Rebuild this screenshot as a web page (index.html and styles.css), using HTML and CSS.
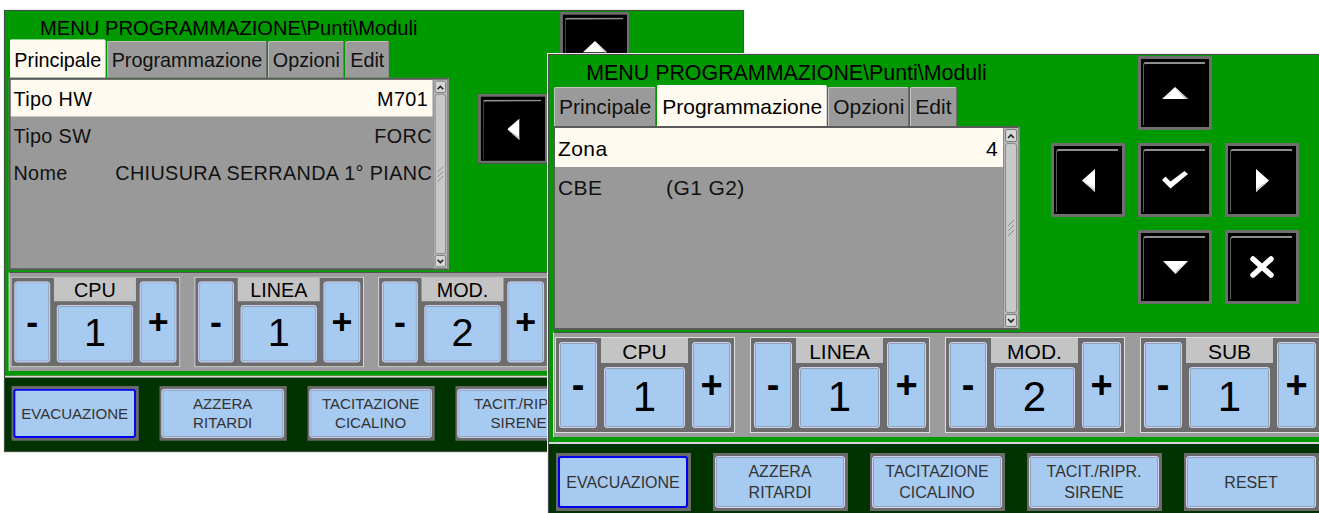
FILE: index.html
```html
<!DOCTYPE html>
<html lang="it">
<head>
<meta charset="utf-8">
<title>Menu Programmazione</title>
<link rel="stylesheet" href="styles.css">
</head>
<body>

<div class="win win-back">
  <div class="top">
    <div class="leftcol">
      <div class="title">MENU PROGRAMMAZIONE\Punti\Moduli</div>
      <div class="tabs">
        <div class="tab active">Principale</div>
        <div class="tab">Programmazione</div>
        <div class="tab">Opzioni</div>
        <div class="tab">Edit</div>
      </div>
      <div class="list">
        <div class="rows">
          <div class="row sel"><span class="k">Tipo HW</span><span class="v right">M701</span></div>
          <div class="row"><span class="k">Tipo SW</span><span class="v right edge">FORC</span></div>
          <div class="row"><span class="k">Nome</span><span class="v">CHIUSURA SERRANDA 1° PIANC</span></div>
        </div>
        <div class="sb">
          <div class="sbtn"><svg width="8" height="6" viewBox="0 0 8 6"><polyline points="1,5 4,2 7,5" fill="none" stroke="#222" stroke-width="1.6"/></svg></div>
          <div class="thumb"><svg width="10" height="20" viewBox="0 0 10 20"><g stroke="#8a8a8a" stroke-width="1"><line x1="8" y1="2" x2="2" y2="8"/><line x1="8" y1="7" x2="2" y2="13"/><line x1="8" y1="12" x2="2" y2="18"/></g></svg></div>
          <div class="sbtn"><svg width="8" height="6" viewBox="0 0 8 6"><polyline points="1,1 4,4 7,1" fill="none" stroke="#222" stroke-width="1.6"/></svg></div>
        </div>
      </div>
    </div>
    <div class="nav">
      <div class="nb up"><svg width="26" height="12" viewBox="0 0 26 12"><polygon points="0,12 13,0 26,12" fill="#fff"/><polygon points="13,0 26,12 23,12" fill="#c8c8c8"/></svg></div>
      <div class="nb left"><svg width="13" height="23" viewBox="0 0 13 23"><polygon points="13,0 0,11.5 13,23" fill="#fff"/><polygon points="0,11.5 13,23 13,20" fill="#c8c8c8"/></svg></div>
      <div class="nb ok"><svg width="26" height="18" viewBox="0 0 26 18"><path d="M0 9 L3.5 5.5 L8.5 10.5 L22.5 0 L26 3 L8.5 17.5 Z" fill="#fff"/></svg></div>
      <div class="nb right"><svg width="13" height="23" viewBox="0 0 13 23"><polygon points="0,0 13,11.5 0,23" fill="#fff"/><polygon points="13,11.5 0,23 0,20" fill="#c8c8c8"/></svg></div>
      <div class="nb down"><svg width="25" height="13" viewBox="0 0 25 13"><polygon points="0,0 25,0 12.5,13" fill="#fff"/><polygon points="25,0 12.5,13 13,10" fill="#c8c8c8"/></svg></div>
      <div class="nb cancel"><svg width="26" height="24" viewBox="0 0 26 24"><path d="M4 4 L22 20 M22 4 L4 20" stroke="#fff" stroke-width="5.5" stroke-linecap="round"/></svg></div>
    </div>
  </div>
  <div class="panel">
    <div class="grp"><div class="pm">-</div><div class="mid"><div class="lbl">CPU</div><div class="val">1</div></div><div class="pm plus">+</div></div>
    <div class="grp"><div class="pm">-</div><div class="mid"><div class="lbl">LINEA</div><div class="val">1</div></div><div class="pm plus">+</div></div>
    <div class="grp"><div class="pm">-</div><div class="mid"><div class="lbl">MOD.</div><div class="val">2</div></div><div class="pm plus">+</div></div>
  </div>
  <div class="bar">
    <div class="bb"><div class="bbi focus">EVACUAZIONE</div></div>
    <div class="bb"><div class="bbi">AZZERA<br>RITARDI</div></div>
    <div class="bb"><div class="bbi">TACITAZIONE<br>CICALINO</div></div>
    <div class="bb"><div class="bbi">TACIT./RIPR.<br>SIRENE</div></div>
  </div>
</div>

<div class="win win-front">
  <div class="top">
    <div class="leftcol">
      <div class="title">MENU PROGRAMMAZIONE\Punti\Moduli</div>
      <div class="tabs">
        <div class="tab">Principale</div>
        <div class="tab active">Programmazione</div>
        <div class="tab">Opzioni</div>
        <div class="tab">Edit</div>
      </div>
      <div class="list">
        <div class="rows">
          <div class="row sel"><span class="k">Zona</span><span class="v right">4</span></div>
          <div class="row"><span class="k">CBE</span><span class="v">(G1 G2)</span></div>
        </div>
        <div class="sb">
          <div class="sbtn"><svg width="8" height="6" viewBox="0 0 8 6"><polyline points="1,5 4,2 7,5" fill="none" stroke="#222" stroke-width="1.6"/></svg></div>
          <div class="thumb"><svg width="10" height="20" viewBox="0 0 10 20"><g stroke="#8a8a8a" stroke-width="1"><line x1="8" y1="2" x2="2" y2="8"/><line x1="8" y1="7" x2="2" y2="13"/><line x1="8" y1="12" x2="2" y2="18"/></g></svg></div>
          <div class="sbtn"><svg width="8" height="6" viewBox="0 0 8 6"><polyline points="1,1 4,4 7,1" fill="none" stroke="#222" stroke-width="1.6"/></svg></div>
        </div>
      </div>
    </div>
    <div class="nav">
      <div class="nb up"><svg width="26" height="12" viewBox="0 0 26 12"><polygon points="0,12 13,0 26,12" fill="#fff"/><polygon points="13,0 26,12 23,12" fill="#c8c8c8"/></svg></div>
      <div class="nb left"><svg width="13" height="23" viewBox="0 0 13 23"><polygon points="13,0 0,11.5 13,23" fill="#fff"/><polygon points="0,11.5 13,23 13,20" fill="#c8c8c8"/></svg></div>
      <div class="nb ok"><svg width="26" height="18" viewBox="0 0 26 18"><path d="M0 9 L3.5 5.5 L8.5 10.5 L22.5 0 L26 3 L8.5 17.5 Z" fill="#fff"/></svg></div>
      <div class="nb right"><svg width="13" height="23" viewBox="0 0 13 23"><polygon points="0,0 13,11.5 0,23" fill="#fff"/><polygon points="13,11.5 0,23 0,20" fill="#c8c8c8"/></svg></div>
      <div class="nb down"><svg width="25" height="13" viewBox="0 0 25 13"><polygon points="0,0 25,0 12.5,13" fill="#fff"/><polygon points="25,0 12.5,13 13,10" fill="#c8c8c8"/></svg></div>
      <div class="nb cancel"><svg width="26" height="24" viewBox="0 0 26 24"><path d="M4 4 L22 20 M22 4 L4 20" stroke="#fff" stroke-width="5.5" stroke-linecap="round"/></svg></div>
    </div>
  </div>
  <div class="panel">
    <div class="grp"><div class="pm">-</div><div class="mid"><div class="lbl">CPU</div><div class="val">1</div></div><div class="pm plus">+</div></div>
    <div class="grp"><div class="pm">-</div><div class="mid"><div class="lbl">LINEA</div><div class="val">1</div></div><div class="pm plus">+</div></div>
    <div class="grp"><div class="pm">-</div><div class="mid"><div class="lbl">MOD.</div><div class="val">2</div></div><div class="pm plus">+</div></div>
    <div class="grp"><div class="pm">-</div><div class="mid"><div class="lbl">SUB</div><div class="val">1</div></div><div class="pm plus">+</div></div>
  </div>
  <div class="bar">
    <div class="bb"><div class="bbi focus">EVACUAZIONE</div></div>
    <div class="bb"><div class="bbi">AZZERA<br>RITARDI</div></div>
    <div class="bb"><div class="bbi">TACITAZIONE<br>CICALINO</div></div>
    <div class="bb"><div class="bbi">TACIT./RIPR.<br>SIRENE</div></div>
    <div class="bb"><div class="bbi">RESET</div></div>
  </div>
</div>

</body>
</html>
```

FILE: styles.css
```css
* { box-sizing: border-box; margin: 0; padding: 0; }

html, body {
  width: 1319px;
  height: 513px;
  overflow: hidden;
  background: #ffffff;
}

body {
  position: relative;
  font-family: "Liberation Sans", Arial, sans-serif;
  color: #000;
}

/* windows on the desktop */
.win {
  position: absolute;
  width: 785px;
  height: 469px;
  background: #009900;
  border: 1px solid #4a4a4a;
  box-shadow: 0 0 0 1px #ececec;
  display: flex;
  flex-direction: column;
  overflow: hidden;
}

.win-back {
  left: 4px;
  top: 10px;
  transform: scale(0.9425);
  transform-origin: 0 0;
}

.win-front {
  left: 548px;
  top: 54px;
}

/* upper part */
.top {
  display: flex;
  height: 277px;
  flex: none;
}

.leftcol {
  width: 467px;
  margin-left: 4px;
  display: flex;
  flex-direction: column;
  flex: none;
}

.title {
  height: 30px;
  padding-top: 7px;
  font-size: 21.4px;
  line-height: 22px;
  text-align: center;
  white-space: nowrap;
  color: #000;
}

.tabs {
  height: 41px;
  display: flex;
  align-items: flex-end;
  gap: 1px;
  padding-left: 1px;
}

.tab {
  height: 39px;
  display: flex;
  align-items: flex-end;
  padding: 0 4px 8px;
  font-size: 21px;
  line-height: 22px;
  white-space: nowrap;
  background: #9a9a9a;
  color: #111;
  border: 1px solid;
  border-bottom: none;
  border-color: #c6c6c6 #6c6c6c #6c6c6c #c6c6c6;
  border-radius: 2px 2px 0 0;
}

.tab.active {
  height: 41px;
  background: #fffaf0;
  border-color: #ffffff #d8d8d8 #d8d8d8 #ffffff;
  color: #000;
}

.list {
  height: 204px;
  display: flex;
  background: #999999;
  border: 2px solid;
  border-color: #5a5a5a #8a8a8a #5a5a5a #5a5a5a;
}

.rows {
  flex: 1;
  min-width: 0;
  overflow: hidden;
}

.row {
  height: 39px;
  padding: 3px 5px 0 3px;
  line-height: 36px;
  font-size: 21px;
  letter-spacing: 0.4px;
  display: flex;
  white-space: nowrap;
  overflow: hidden;
  color: #111;
}

.row.sel {
  background: #fffaf0;
  color: #000;
}

.k {
  width: 108px;
  flex: none;
}

.v.right {
  margin-left: auto;
}

.v.edge {
  margin-right: -4px;
}

/* scrollbar */
.sb {
  width: 15px;
  flex: none;
  display: flex;
  flex-direction: column;
  background: #b8b8b8;
  padding: 1px;
  border-left: 1px solid #8a8a8a;
}

.sbtn {
  height: 13px;
  flex: none;
  background: #d6d6d6;
  border: 1px solid #7a7a7a;
  border-radius: 2px;
  display: flex;
  align-items: center;
  justify-content: center;
}

.thumb {
  flex: 1;
  margin: 1px 0;
  background: #c8c8c8;
  border: 1px solid #8a8a8a;
  border-radius: 3px;
  display: flex;
  align-items: center;
  justify-content: center;
}

/* navigation keys */
.nav {
  margin: 1px 0 0 31px;
  display: grid;
  grid-template-columns: repeat(3, 74px);
  grid-template-rows: repeat(3, 74px);
  gap: 13px;
  grid-template-areas:
    ". up ."
    "left ok right"
    ". down cancel";
}

.nb {
  position: relative;
  background: #000;
  border: 3px solid #6e6e6e;
  display: flex;
  align-items: center;
  justify-content: center;
}

.nb::before {
  content: "";
  position: absolute;
  left: 2px;
  top: 3px;
  right: 4px;
  bottom: 2px;
  border-top: 2px solid #8e8e8e;
  border-left: 1px solid #5a5a5a;
  border-top-left-radius: 3px;
}

.nb svg { position: relative; }

.nb.up { grid-area: up; }
.nb.left { grid-area: left; }
.nb.ok { grid-area: ok; }
.nb.right { grid-area: right; }
.nb.down { grid-area: down; }
.nb.cancel { grid-area: cancel; }

/* spinner panel */
.panel {
  width: 769px;
  height: 105px;
  flex: none;
  margin-left: 4px;
  background: #9c9c9c;
  border-top: 1px solid #505050;
  border-left: 1px solid #e0e0e0;
  padding: 4px 1px;
  display: flex;
  gap: 15px;
}

.grp {
  width: 180px;
  height: 96px;
  flex: none;
  background: #6c6c6c;
  border: 1px solid #dedede;
  padding: 0 3px 4px;
  display: flex;
  gap: 4px;
}

.pm, .val, .bbi {
  background: #a6caf0;
  border: 1px solid #d4d0f2;
  box-shadow: inset 0 0 0 1px #8ea2b8;
  border-radius: 3px;
}

.pm {
  width: 38px;
  margin-top: 4px;
  flex: none;
  display: flex;
  align-items: center;
  justify-content: center;
  font-size: 38px;
  font-weight: bold;
  line-height: 1;
  color: #000;
}

.pm.plus { width: 39px; }

.mid {
  width: 87px;
  flex: none;
  display: flex;
  flex-direction: column;
  align-items: center;
}

.lbl {
  align-self: stretch;
  height: 25px;
  padding-top: 3px;
  background: #c4c4c4;
  text-align: center;
  font-size: 21px;
  line-height: 22px;
  color: #000;
}

.val {
  width: 81px;
  height: 61px;
  margin-top: 4px;
  text-align: center;
  font-size: 42px;
  line-height: 58px;
  color: #000;
}

/* bottom command bar */
.bar {
  flex: 1;
  margin-top: 5px;
  background: #003300;
  border-top: 2px solid #d8d8d8;
  padding: 9px 0 0 7px;
  display: flex;
  gap: 22px;
}

.bb {
  width: 135px;
  height: 58px;
  flex: none;
  background: #6b6b6b;
  padding: 3px 3px 3px 2px;
}

.bbi {
  height: 100%;
  display: flex;
  align-items: center;
  justify-content: center;
  text-align: center;
  font-size: 16px;
  line-height: 21px;
  color: #333;
  white-space: nowrap;
}

.bbi.focus {
  border: 2px solid #0000ee;
  box-shadow: none;
}
```
